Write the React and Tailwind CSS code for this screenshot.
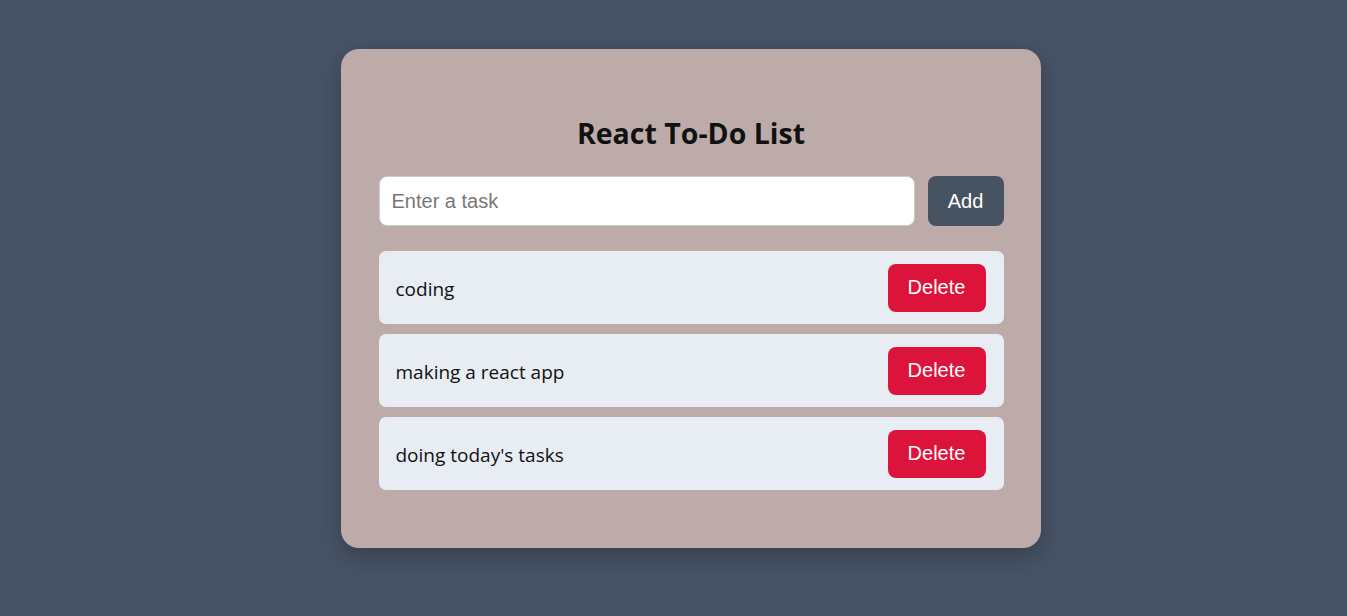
import React, { useState } from "react";

export default function App() {
  const [tasks, setTasks] = useState(["coding", "making a react app", "doing today's tasks"]);
  const [text, setText] = useState("");

  const add = () => {
    if (!text.trim()) return;
    setTasks([...tasks, text.trim()]);
    setText("");
  };

  return (
    <div className="min-h-[616px] bg-[#475366] pt-[49px] pl-[34px] flex justify-center font-['Open_Sans',sans-serif]">
      <div className="w-[700px] h-[499px] bg-[#bdabaa] rounded-[18px] shadow-[0_8px_24px_rgba(0,0,0,0.25)] pl-[38px] pr-[37px] pt-[67px]">
        <h1 className="text-center text-[28.5px] leading-[34px] font-bold text-[#111] mb-[26px]">React To-Do List</h1>

        <div className="flex gap-[13px] mb-[25px]">
          <input
            value={text}
            onChange={(e) => setText(e.target.value)}
            placeholder="Enter a task"
            className="flex-1 h-[50px] bg-white border border-[#cccccc] rounded-[8px] px-3 text-[20px] font-['Liberation_Sans',Arial,sans-serif] placeholder:text-[#777] outline-none"
          />
          <button
            onClick={add}
            className="w-[76px] h-[50px] bg-[#475360] text-white rounded-[8px] text-[20px] font-['Liberation_Sans',Arial,sans-serif]"
          >
            Add
          </button>
        </div>

        <ul className="flex flex-col gap-[10px]">
          {tasks.map((t, i) => (
            <li key={i} className="h-[73px] bg-[#e8ecf3] rounded-[7px] flex items-center justify-between pl-[17px] pr-[18px]">
              <span className="text-[19px] leading-[26px] pt-[2px] text-[#111]">{t}</span>
              <button
                onClick={() => setTasks(tasks.filter((_, j) => j !== i))}
                className="w-[98px] h-[48px] pb-[2px] bg-[#dc143c] text-white rounded-[8px] text-[20px] font-['Liberation_Sans',Arial,sans-serif]"
              >
                Delete
              </button>
            </li>
          ))}
        </ul>
      </div>
    </div>
  );
}
